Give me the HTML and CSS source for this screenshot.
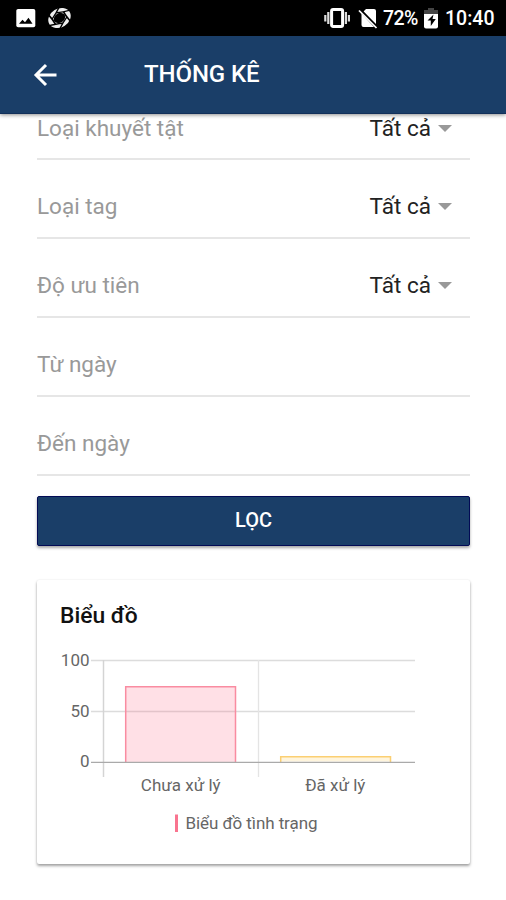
FILE: index.html
```html
<!DOCTYPE html>
<html lang="vi">
<head>
<meta charset="utf-8">
<title>Thống kê</title>
<link rel="stylesheet" href="styles.css">
</head>
<body>
<div class="status">
  <svg class="status-left" width="80" height="36" viewBox="0 0 80 36">
    <rect x="16.300" y="9" width="19" height="18.300" rx="1.800" fill="#fff"/>
    <path d="M19 23.800l3.500-4 2.500 2.500 3.500-4.500 4 6z" fill="#000"/>
    <defs><path id="cut" d="M-6-3.500Q-1-6 6-11.500"/></defs>
    <g transform="translate(59.500 18) rotate(-32) scale(1.120 .88)" fill="none">
      <circle r="8" stroke="#eee" stroke-width="5.200"/>
      <g stroke="#000" stroke-width="1.500">
        <use href="#cut"/>
        <use href="#cut" transform="rotate(60)"/>
        <use href="#cut" transform="rotate(120)"/>
        <use href="#cut" transform="rotate(180)"/>
        <use href="#cut" transform="rotate(240)"/>
        <use href="#cut" transform="rotate(300)"/>
      </g>
    </g>
  </svg>
  <div class="status-right">
    <svg width="56" height="36" viewBox="0 0 56 36">
      <rect x="7.600" y="9.500" width="11" height="17" rx="1.500" fill="none" stroke="#fff" stroke-width="3"/>
      <path d="M4.300 12v12M21.900 12v12M1.300 15v6.500M24.900 15v6.500" stroke="#ddd" stroke-width="2.200"/>
      <path d="M42 9h8q2 0 2 2v14L39.500 11.500zM37.500 13.500L50 27H39.500q-2 0-2-2z" fill="#fff"/>
      <path d="M36.500 9.500L53.500 26.500" stroke="#000" stroke-width="1.500"/>
      <path d="M35 10.500L52.500 28" stroke="#fff" stroke-width="1.700"/>
    </svg>
    <span class="battery-text">72%</span>
    <svg width="14" height="36" viewBox="0 0 14 36">
      <path d="M4 8h6v2h4v4H0v-4h4z" fill="#444"/>
      <path d="M0 14h14v12.500q0 2-2 2H2q-2 0-2-2z" fill="#fff"/>
      <path d="M9.500 14.500L3.500 20.500h3.300V26l5-7H8.500z" fill="#000"/>
    </svg>
    <span class="clock">10:40</span>
  </div>
</div>
<header class="bar">
  <svg class="back" width="24" height="24" viewBox="0 0 24 24"><path d="M13 2L3 12l10 10M3 12H23.500" fill="none" stroke="#fff" stroke-width="3"/></svg>
  <h1>THỐNG KÊ</h1>
</header>
<main>
  <div class="row first"><span>Loại khuyết tật</span><span class="value">Tất cả</span><i class="caret"></i></div>
  <div class="row"><span>Loại tag</span><span class="value">Tất cả</span><i class="caret"></i></div>
  <div class="row"><span>Độ ưu tiên</span><span class="value">Tất cả</span><i class="caret"></i></div>
  <div class="row"><span>Từ ngày</span></div>
  <div class="row"><span>Đến ngày</span></div>
  <button class="filter">LỌC</button>
  <section class="card">
    <h2>Biểu đồ</h2>
    <svg class="chart" width="432" height="200" viewBox="0 0 432 200">
      <g fill="none" stroke-width="1.300">
        <path d="M54 20.500H378M54 71.500H378" stroke="#dcdcdc"/>
        <path d="M66.500 20V137" stroke="#d4d4d4" stroke-width="1.500"/>
        <path d="M221.500 20V137" stroke="#e4e4e4"/>
      </g>
      <rect x="88" y="46" width="111" height="76" fill="#ff6384" fill-opacity=".2"/>
      <path d="M88.700 122V46.700H198.500V122" fill="none" stroke="#f98ca1" stroke-width="1.500"/>
      <rect x="243" y="116.500" width="111" height="5" fill="#fff5dd"/>
      <path d="M243.700 122V116.800H353.500V122" fill="none" stroke="#fbcf72" stroke-width="1.500"/>
      <path d="M54 122.300H378" stroke="#aaa" stroke-width="1.300"/>
      <g class="ticks">
        <text x="52.500" y="25.500" text-anchor="end">100</text>
        <text x="52.500" y="76.500" text-anchor="end">50</text>
        <text x="52.500" y="127" text-anchor="end">0</text>
        <text x="143.700" y="151" text-anchor="middle">Chưa xử lý</text>
        <text x="298.300" y="151" text-anchor="middle">Đã xử lý</text>
        <text x="148.500" y="188.500" textLength="132" lengthAdjust="spacing">Biểu đồ tình trạng</text>
      </g>
      <path d="M139.500 174.500V192" stroke="#f9748f" stroke-width="3"/>
    </svg>
  </section>
</main>
</body>
</html>
```
FILE: styles.css
```css
* { box-sizing: border-box; }
body {
  margin: 0;
  height: 900px;
  overflow: hidden;
  background: #fff;
  font-family: Roboto, "Liberation Sans", sans-serif;
}
svg { display: block; flex: none; }
.status {
  height: 36px;
  background: #000;
  color: #fff;
  display: flex;
  justify-content: space-between;
}
.status-right {
  display: flex;
  align-items: flex-start;
  width: 182px;
  font-size: 19.5px;
  line-height: 38px;
}
.battery-text { width: 36px; margin: 0 5px 0 3px; font-size: 19.5px; font-weight: 500; letter-spacing: -.6px; }
.clock { margin-left: 7px; font-weight: 500; }
.bar {
  position: relative;
  height: 78px;
  background: #1a3e68;
  color: #fff;
  display: flex;
  align-items: center;
  padding-left: 33px;
  border-bottom: 1px solid #12305a;
  box-shadow: 0 1px 4px rgba(0, 0, 0, .45);
}
h1 {
  margin: 0 0 1px 87px;
  font-size: 24px;
  line-height: 30px;
  font-weight: 500;
  letter-spacing: -.1px;
}
main { padding: 0 36px 0 37px; }
.row {
  height: 79px;
  padding-top: 14px;
  display: flex;
  align-items: center;
  border-bottom: 2px solid #e6e6e6;
  font-size: 22.5px;
  line-height: 28px;
  color: #999;
}
.row.first { height: 46px; padding: 0 0 17px; }
.value { margin-left: auto; color: #222; }
.caret {
  margin: 1px 18px 0 7px;
  border: 7px solid transparent;
  border-top-color: #999;
  border-bottom: 0;
}
.filter {
  display: block;
  width: 433px;
  height: 50px;
  margin: 20px 0 34px;
  padding: 0 0 2px;
  border: 1px solid #020b55;
  border-radius: 2px;
  background: #1a3e68;
  box-shadow: 0 2px 3px rgba(0, 0, 0, .35);
  color: #fff;
  font: 500 20px/24px Roboto, sans-serif;
}
.card {
  height: 284px;
  border-radius: 2px;
  background: #fff;
  box-shadow: 0 2px 3px rgba(0, 0, 0, .36), 0 0 2px rgba(0, 0, 0, .08);
}
h2 {
  margin: 0;
  padding: 21px 0 0 23px;
  height: 60px;
  font-size: 22.8px;
  line-height: 30px;
  font-weight: 500;
  color: #111;
}
.ticks { font-size: 17px; fill: #666; }
```
